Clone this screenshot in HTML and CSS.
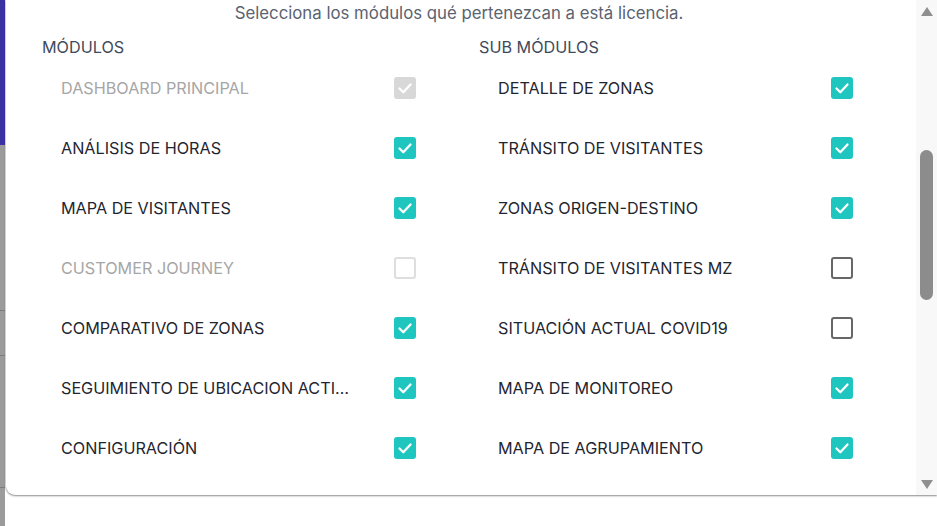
FILE: index.html
```html
<!DOCTYPE html>
<html lang="es">
<head>
<meta charset="utf-8">
<title>Licencia - módulos</title>
<link rel="stylesheet" href="styles.css">
</head>
<body>
<div class="page">
  <div class="backdrop">
    <div class="bd-purple"></div>
    <div class="bd-gray">
      <div class="bd-line l1"></div>
      <div class="bd-line l2"></div>
      <div class="bd-line l3"></div>
    </div>
  </div>
  <div class="modal">
    <div class="content">
      <p class="title">Selecciona los módulos qué pertenezcan a está licencia.</p>
      <div class="columns">
        <div class="col">
          <div class="col-head">MÓDULOS</div>
          <div class="row disabled"><span class="label">DASHBOARD PRINCIPAL</span><span class="cb checked dis"><svg viewBox="0 0 22 22"><polyline points="5.5,11.5 9.3,15.2 16.5,7.5"/></svg></span></div>
          <div class="row"><span class="label">ANÁLISIS DE HORAS</span><span class="cb checked"><svg viewBox="0 0 22 22"><polyline points="5.5,11.5 9.3,15.2 16.5,7.5"/></svg></span></div>
          <div class="row"><span class="label">MAPA DE VISITANTES</span><span class="cb checked"><svg viewBox="0 0 22 22"><polyline points="5.5,11.5 9.3,15.2 16.5,7.5"/></svg></span></div>
          <div class="row disabled"><span class="label">CUSTOMER JOURNEY</span><span class="cb empty dis"></span></div>
          <div class="row"><span class="label">COMPARATIVO DE ZONAS</span><span class="cb checked"><svg viewBox="0 0 22 22"><polyline points="5.5,11.5 9.3,15.2 16.5,7.5"/></svg></span></div>
          <div class="row"><span class="label">SEGUIMIENTO DE UBICACION ACTIVA</span><span class="cb checked"><svg viewBox="0 0 22 22"><polyline points="5.5,11.5 9.3,15.2 16.5,7.5"/></svg></span></div>
          <div class="row"><span class="label">CONFIGURACIÓN</span><span class="cb checked"><svg viewBox="0 0 22 22"><polyline points="5.5,11.5 9.3,15.2 16.5,7.5"/></svg></span></div>
          <div class="row disabled"><span class="label">&nbsp;</span><span class="cb checked dis"><svg viewBox="0 0 22 22"><polyline points="5.5,11.5 9.3,15.2 16.5,7.5"/></svg></span></div>
        </div>
        <div class="col">
          <div class="col-head">SUB MÓDULOS</div>
          <div class="row"><span class="label">DETALLE DE ZONAS</span><span class="cb checked"><svg viewBox="0 0 22 22"><polyline points="5.5,11.5 9.3,15.2 16.5,7.5"/></svg></span></div>
          <div class="row"><span class="label">TRÁNSITO DE VISITANTES</span><span class="cb checked"><svg viewBox="0 0 22 22"><polyline points="5.5,11.5 9.3,15.2 16.5,7.5"/></svg></span></div>
          <div class="row"><span class="label">ZONAS ORIGEN-DESTINO</span><span class="cb checked"><svg viewBox="0 0 22 22"><polyline points="5.5,11.5 9.3,15.2 16.5,7.5"/></svg></span></div>
          <div class="row"><span class="label">TRÁNSITO DE VISITANTES MZ</span><span class="cb empty"></span></div>
          <div class="row"><span class="label">SITUACIÓN ACTUAL COVID19</span><span class="cb empty"></span></div>
          <div class="row"><span class="label">MAPA DE MONITOREO</span><span class="cb checked"><svg viewBox="0 0 22 22"><polyline points="5.5,11.5 9.3,15.2 16.5,7.5"/></svg></span></div>
          <div class="row"><span class="label">MAPA DE AGRUPAMIENTO</span><span class="cb checked"><svg viewBox="0 0 22 22"><polyline points="5.5,11.5 9.3,15.2 16.5,7.5"/></svg></span></div>
          <div class="row"><span class="label">&nbsp;</span><span class="cb checked"><svg viewBox="0 0 22 22"><polyline points="5.5,11.5 9.3,15.2 16.5,7.5"/></svg></span></div>
        </div>
      </div>
    </div>
    <div class="scrollbar">
      <span class="arrow up"></span>
      <div class="track"><div class="thumb"></div></div>
      <span class="arrow down"></span>
    </div>
  </div>
</div>
</body>
</html>
```

FILE: styles.css
```css
html, body {
  margin: 0;
  padding: 0;
  background: #ffffff;
}

body {
  font-family: Inter, "Noto Sans", "Liberation Sans", sans-serif;
  overflow: hidden;
}

.page {
  display: flex;
  width: 937px;
  height: 526px;
  overflow: hidden;
}

.backdrop {
  width: 5px;
  flex: none;
  display: flex;
  flex-direction: column;
}

.bd-purple {
  height: 145px;
  background: #3a31a5;
}

.bd-gray {
  flex: 1;
  background: #9b9b9b;
  display: flex;
  flex-direction: column;
}

.bd-line {
  height: 1px;
  background: #7c7c7c;
}

.l1 { margin-top: 165px; }
.l2 { margin-top: 44px; }
.l3 { margin-top: 131px; }

.modal {
  flex: 1;
  height: 495px;
  margin-left: 1px;
  background: #ffffff;
  border-bottom-left-radius: 9px;
  box-shadow: 0 1px 2px rgba(0, 0, 0, 0.45), -1px 0 1px rgba(0, 0, 0, 0.08);
  display: flex;
  overflow: hidden;
}

.content {
  flex: 1;
  padding-left: 36px;
  overflow: hidden;
}

.title {
  margin: 0;
  height: 27px;
  line-height: 27px;
  font-size: 16.8px;
  color: #5a6371;
  text-align: center;
  padding-right: 40px;
}

.columns {
  display: grid;
  grid-template-columns: 437px 436px;
  margin-top: 9px;
}

.col-head {
  height: 22px;
  line-height: 22px;
  font-size: 16.2px;
  color: #3f4b5b;
}

.row {
  height: 60px;
  display: flex;
  align-items: center;
  padding-left: 19px;
}

.label {
  width: 289px;
  margin-right: 44px;
  font-size: 16.2px;
  color: #1f2630;
  white-space: nowrap;
  overflow: hidden;
  text-overflow: ellipsis;
}

.row.disabled .label {
  color: #a6a6a6;
}

.cb {
  width: 22px;
  height: 22px;
  flex: none;
  box-sizing: border-box;
  border-radius: 3px;
  display: block;
}

.cb svg {
  width: 22px;
  height: 22px;
  display: block;
}

.cb polyline {
  fill: none;
  stroke: #ffffff;
  stroke-width: 2.3;
  stroke-linecap: round;
  stroke-linejoin: round;
}

.cb.checked {
  background: #1fc6bf;
}

.cb.checked.dis {
  background: #d8d8d8;
}

.cb.empty {
  border: 2px solid #676767;
  background: #ffffff;
}

.cb.empty.dis {
  border-color: #dedede;
}

.scrollbar {
  width: 21px;
  flex: none;
  background: #f8f8f8;
  display: flex;
  flex-direction: column;
  align-items: center;
  padding: 7px 0 6px;
  box-sizing: border-box;
}

.arrow {
  width: 0;
  height: 0;
  border-left: 6px solid transparent;
  border-right: 6px solid transparent;
}

.arrow.up {
  border-bottom: 9px solid #8f8f8f;
}

.arrow.down {
  border-top: 9px solid #8f8f8f;
}

.track {
  flex: 1;
  width: 100%;
  display: flex;
  justify-content: center;
}

.thumb {
  width: 13px;
  height: 150px;
  margin-top: 134px;
  border-radius: 7px;
  background: #8c8c8c;
}
```
